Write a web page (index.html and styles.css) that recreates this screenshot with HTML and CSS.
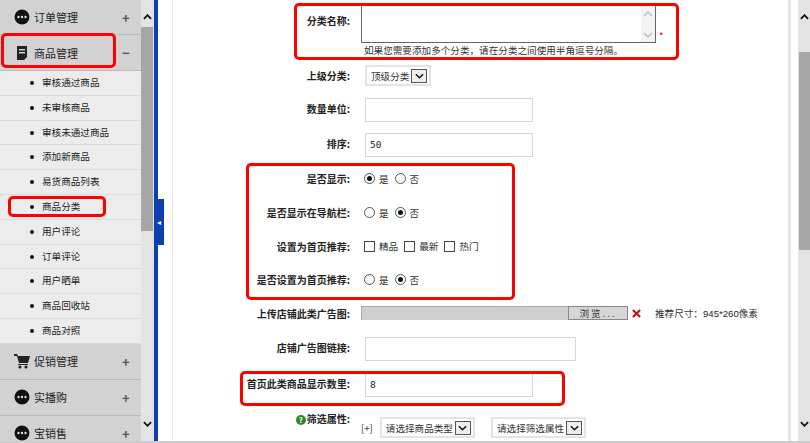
FILE: index.html
```html
<!DOCTYPE html>
<html lang="en">
<head>
    <meta charset="UTF-8">
    <title>商品分类</title>
    <link rel="stylesheet" href="styles.css">
</head>
<body>
    <div class="page">
        <div class="sidebar">
            <div class="menu-head first">
                <svg class="menu-icon" viewBox="0 0 16 16"><circle cx="8" cy="8" r="7.5" fill="#111"/><circle cx="4.5" cy="8" r="1.2" fill="#ddd"/><circle cx="8" cy="8" r="1.2" fill="#ddd"/><circle cx="11.5" cy="8" r="1.2" fill="#ddd"/></svg>
                <span class="menu-title">订单管理</span><span class="menu-sign">+</span>
            </div>
            <div class="menu-head">
                <svg class="menu-icon" viewBox="0 0 16 16"><path d="M3 1h10v11l-3 3H3z" fill="#222"/><rect x="5" y="4" width="6" height="1.4" fill="#ddd"/><rect x="5" y="7" width="6" height="1.4" fill="#ddd"/></svg>
                <span class="menu-title">商品管理</span><span class="menu-sign">−</span>
            </div>
            <div class="menu-item">审核通过商品</div>
            <div class="menu-item">未审核商品</div>
            <div class="menu-item">审核未通过商品</div>
            <div class="menu-item">添加新商品</div>
            <div class="menu-item">易货商品列表</div>
            <div class="menu-item">商品分类</div>
            <div class="menu-item">用户评论</div>
            <div class="menu-item">订单评论</div>
            <div class="menu-item">用户晒单</div>
            <div class="menu-item">商品回收站</div>
            <div class="menu-item">商品对照</div>
            <div class="menu-head">
                <svg class="menu-icon cart" viewBox="0 0 16 16"><path d="M0 1h3l1 2h12l-2 7H5L3 3H0z" fill="#222"/><rect x="4" y="11" width="10" height="1" fill="#222"/><circle cx="6" cy="14" r="1.6" fill="#222"/><circle cx="12" cy="14" r="1.6" fill="#222"/></svg>
                <span class="menu-title">促销管理</span><span class="menu-sign">+</span>
            </div>
            <div class="menu-head">
                <svg class="menu-icon" viewBox="0 0 16 16"><circle cx="8" cy="8" r="7.5" fill="#111"/><circle cx="4.5" cy="8" r="1.2" fill="#ddd"/><circle cx="8" cy="8" r="1.2" fill="#ddd"/><circle cx="11.5" cy="8" r="1.2" fill="#ddd"/></svg>
                <span class="menu-title">实播购</span><span class="menu-sign">+</span>
            </div>
            <div class="menu-head">
                <svg class="menu-icon" viewBox="0 0 16 16"><circle cx="8" cy="8" r="7.5" fill="#111"/><circle cx="4.5" cy="8" r="1.2" fill="#ddd"/><circle cx="8" cy="8" r="1.2" fill="#ddd"/><circle cx="11.5" cy="8" r="1.2" fill="#ddd"/></svg>
                <span class="menu-title">宝销售</span><span class="menu-sign">+</span>
            </div>
        </div>

        <div class="scrollbar side-scroll">
            <svg class="arrow" viewBox="0 0 10 6"><path d="M1 5l4-4 4 4" fill="none" stroke="#111" stroke-width="2"/></svg>
            <div class="thumb"></div>
            <svg class="arrow down" viewBox="0 0 10 6"><path d="M1 1l4 4 4-4" fill="none" stroke="#111" stroke-width="2"/></svg>
        </div>

        <div class="divider">
            <div class="divider-tab">◂</div>
        </div>

        <div class="content">
            <div class="form">
                <div class="row row-name">
                    <div class="label">分类名称:</div>
                    <div class="field">
                        <div class="name-line">
                            <div class="textarea">
                                <div class="ta-scroll">
                                    <svg viewBox="0 0 10 6"><path d="M1 5l4-4 4 4" fill="none" stroke="#bbb" stroke-width="1.4"/></svg>
                                    <svg viewBox="0 0 10 6"><path d="M1 1l4 4 4-4" fill="none" stroke="#bbb" stroke-width="1.4"/></svg>
                                </div>
                            </div>
                            <span class="required">*</span>
                        </div>
                        <div class="hint">如果您需要添加多个分类，请在分类之间使用半角逗号分隔。</div>
                    </div>
                </div>
                <div class="row row-select">
                    <div class="label">上级分类:</div>
                    <div class="field indent">
                        <div class="select">顶级分类<span class="select-btn"><svg viewBox="0 0 10 6"><path d="M1 1l4 4 4-4" fill="none" stroke="#111" stroke-width="1.6"/></svg></span></div>
                    </div>
                </div>
                <div class="row row-input row-unit">
                    <div class="label">数量单位:</div>
                    <div class="field indent"><div class="input"></div></div>
                </div>
                <div class="row row-input row-short">
                    <div class="label">排序:</div>
                    <div class="field indent"><div class="input value">50</div></div>
                </div>
                <div class="row row-choice">
                    <div class="label">是否显示:</div>
                    <div class="field choices">
                        <span class="radio on"></span><span class="opt">是</span>
                        <span class="radio"></span><span class="opt">否</span>
                    </div>
                </div>
                <div class="row row-choice">
                    <div class="label">是否显示在导航栏:</div>
                    <div class="field choices">
                        <span class="radio"></span><span class="opt">是</span>
                        <span class="radio on"></span><span class="opt">否</span>
                    </div>
                </div>
                <div class="row row-choice">
                    <div class="label">设置为首页推荐:</div>
                    <div class="field choices">
                        <span class="check"></span><span class="opt">精品</span>
                        <span class="check"></span><span class="opt">最新</span>
                        <span class="check"></span><span class="opt">热门</span>
                    </div>
                </div>
                <div class="row row-choice">
                    <div class="label">是否设置为首页推荐:</div>
                    <div class="field choices">
                        <span class="radio"></span><span class="opt">是</span>
                        <span class="radio on"></span><span class="opt">否</span>
                    </div>
                </div>
                <div class="row row-upload">
                    <div class="label">上传店铺此类广告图:</div>
                    <div class="field upload">
                        <div class="file-path"></div>
                        <div class="file-btn">浏览...</div>
                        <svg class="remove" viewBox="0 0 10 10"><path d="M1 1l8 8M9 1l-8 8" stroke="#c4121a" stroke-width="2.4"/></svg>
                        <span class="size-note">推荐尺寸：<span class="size-num">945*260</span>像素</span>
                    </div>
                </div>
                <div class="row row-input">
                    <div class="label">店铺广告图链接:</div>
                    <div class="field indent"><div class="input wide"></div></div>
                </div>
                <div class="row row-input">
                    <div class="label">首页此类商品显示数里:</div>
                    <div class="field indent"><div class="input value">8</div></div>
                </div>
                <div class="row row-filter">
                    <div class="label"><span class="help">?</span>筛选属性:</div>
                    <div class="field filter">
                        <span class="add">[+]</span>
                        <div class="select">请选择商品类型<span class="select-btn"><svg viewBox="0 0 10 6"><path d="M1 1l4 4 4-4" fill="none" stroke="#111" stroke-width="1.6"/></svg></span></div>
                        <div class="select">请选择筛选属性<span class="select-btn"><svg viewBox="0 0 10 6"><path d="M1 1l4 4 4-4" fill="none" stroke="#111" stroke-width="1.6"/></svg></span></div>
                    </div>
                </div>
            </div>
        </div>

        <div class="scrollbar page-scroll">
            <svg class="arrow" viewBox="0 0 10 6"><path d="M1 5l4-4 4 4" fill="none" stroke="#111" stroke-width="2"/></svg>
            <div class="thumb"></div>
            <svg class="arrow down" viewBox="0 0 10 6"><path d="M1 1l4 4 4-4" fill="none" stroke="#111" stroke-width="2"/></svg>
        </div>

        <!-- red marks drawn over the screenshot -->
        <div class="mark mark-menu"></div>
        <div class="mark mark-item"></div>
        <div class="mark mark-name"></div>
        <div class="mark mark-group"></div>
        <div class="mark mark-count"></div>
    </div>
</body>
</html>
```
FILE: styles.css
```css
* {
    box-sizing: border-box;
}
body {
    margin: 0;
    font-family: "Noto Sans CJK SC", "Liberation Sans", sans-serif;
    font-size: 9.6px;
    color: #333;
    background: #fff;
}
.page {
    position: relative;
    display: flex;
    width: 810px;
    height: 443px;
    overflow: hidden;
    border-bottom: 2px solid #ccc;
}

/* left menu */
.sidebar {
    width: 141px;
    flex: none;
    background: #ececec;
}
.menu-head {
    display: flex;
    align-items: center;
    height: 36px;
    padding-left: 14px;
    background: #d2d2d2;
    border-bottom: 1px solid #bbb;
    font-size: 11px;
    color: #222;
}
.menu-head.first {
    height: 35px;
}
.menu-icon {
    width: 16px;
    height: 16px;
    flex: none;
}
.menu-title {
    margin-left: 4px;
    width: 88px;
}
.menu-sign {
    font-size: 13px;
    font-weight: bold;
    color: #555;
}
.menu-item {
    position: relative;
    height: 24.8px;
    line-height: 23px;
    padding-left: 42px;
    border-bottom: 1px solid #dcdcdc;
    color: #222;
}
.menu-item::before {
    content: "";
    position: absolute;
    left: 30px;
    top: 10px;
    width: 4px;
    height: 4px;
    border-radius: 50%;
    background: #111;
}

/* scrollbars */
.scrollbar {
    position: relative;
    width: 13px;
    flex: none;
    background: #e3e3e3;
}
.scrollbar .arrow {
    position: absolute;
    left: 2px;
    top: 14px;
    width: 9px;
    height: 6px;
}
.scrollbar .arrow.down {
    top: auto;
    bottom: 14px;
}
.thumb {
    position: absolute;
    left: 0;
    width: 12px;
    background: #a6a6a6;
}
.side-scroll .thumb {
    top: 27px;
    height: 204px;
}
.page-scroll {
    width: 12px;
}
.page-scroll .thumb {
    top: 52px;
    left: 1px;
    width: 11px;
    height: 198px;
}

/* blue strip with the collapse tab */
.divider {
    position: relative;
    width: 4px;
    flex: none;
    background: #0a40b0;
}
.divider-tab {
    position: absolute;
    left: 0;
    top: 199px;
    width: 10px;
    height: 46px;
    background: #0a40b0;
    color: #fff;
    font-size: 8px;
    line-height: 46px;
    text-align: center;
}

/* form */
.content {
    flex: 1;
    padding-left: 14px;
    padding-right: 7px;
}
.form {
    height: 100%;
    border-left: 1px solid #e6e6e6;
    border-right: 3px solid #e6e6e6;
}
.row {
    display: flex;
}
.label {
    width: 177px;
    flex: none;
    text-align: right;
    font-size: 10px;
    font-weight: bold;
    color: #222;
}
.field {
    margin-left: 11px;
    flex: 1;
}
.field.indent {
    margin-left: 15px;
}
.row-name {
    height: 65px;
    padding-top: 6px;
}
.row-name .label {
    padding-top: 7px;
}
.name-line {
    display: flex;
    align-items: flex-end;
}
.textarea {
    display: flex;
    justify-content: flex-end;
    width: 295px;
    height: 37px;
    border: 1px solid #666;
    border-top: none;
    background: #fff;
}
.ta-scroll {
    display: flex;
    flex-direction: column;
    justify-content: space-between;
    align-items: center;
    width: 14px;
    padding: 5px 0 4px;
    background: #f4f4f4;
}
.ta-scroll svg {
    width: 10px;
    height: 6px;
}
.required {
    margin-left: 3px;
    line-height: 14px;
    color: #e00;
}
.hint {
    margin-left: 3px;
    line-height: 14px;
}
.row-select {
    height: 33px;
    align-items: flex-start;
}
.row-select .label {
    line-height: 21px;
}
.select {
    display: inline-flex;
    align-items: center;
    height: 21px;
    padding: 0 2px 0 4px;
    border: 2px solid #e4e4e4;
    color: #333;
    background: #fff;
}
.select-btn {
    display: flex;
    align-items: center;
    justify-content: center;
    width: 16px;
    height: 14px;
    margin-left: 2px;
    border: 1px solid #555;
    background: #eee;
}
.select-btn svg {
    width: 9px;
    height: 6px;
}
.row-input {
    height: 36px;
    align-items: flex-start;
}
.row-unit {
    height: 35px;
}
.row-short {
    height: 29px;
}
.row-input .label {
    line-height: 22px;
}
.input {
    width: 168px;
    height: 24px;
    padding-left: 4px;
    line-height: 21px;
    border: 1px solid #d6d6d6;
    font-family: "DejaVu Sans Mono", monospace;
    font-size: 9.5px;
    color: #223;
}
.input.wide {
    width: 211px;
}
.row-choice {
    align-items: center;
    height: 33.7px;
}
.choices {
    display: flex;
    align-items: center;
    margin-left: 14px;
}
.radio {
    position: relative;
    width: 11px;
    height: 11px;
    border: 1px solid #555;
    border-radius: 50%;
    margin-right: 4px;
}
.radio.on::after {
    content: "";
    position: absolute;
    left: 2px;
    top: 2px;
    width: 5px;
    height: 5px;
    border-radius: 50%;
    background: #111;
}
.check {
    width: 11px;
    height: 11px;
    border: 1px solid #444;
    margin-right: 4px;
}
.opt {
    margin-right: 6px;
}
.row-upload {
    align-items: center;
    height: 32.5px;
    margin-bottom: 8px;
}
.upload {
    display: flex;
    align-items: center;
}
.file-path {
    width: 207px;
    height: 14px;
    background: #cfcfcf;
    border-top: 1px solid #aaa;
    border-left: 1px solid #aaa;
}
.file-btn {
    width: 60px;
    height: 14px;
    line-height: 12px;
    text-align: center;
    letter-spacing: 2px;
    background: #d6d6d6;
    border: 1px solid #888;
}
.remove {
    width: 9px;
    height: 9px;
    margin-left: 4px;
}
.size-note {
    margin-left: 14px;
}
.size-num {
    font-family: "Liberation Sans", sans-serif;
    color: #223;
}
.row-filter {
    height: 32px;
    padding-top: 2px;
}
.help {
    display: inline-block;
    width: 10px;
    height: 10px;
    margin-right: 1px;
    border-radius: 50%;
    background: #2a8a2a;
    color: #fff;
    font-size: 8px;
    line-height: 10px;
    text-align: center;
}
.filter {
    display: flex;
    align-items: center;
    align-self: flex-start;
    padding-top: 6px;
}
.add {
    margin-right: 7px;
}
.filter .select {
    margin-right: 16px;
}

/* red marks */
.mark {
    position: absolute;
    border: 3px solid #f00;
    border-radius: 5px;
}
.mark-menu {
    left: 1px;
    top: 33px;
    width: 115px;
    height: 35px;
}
.mark-item {
    left: 8px;
    top: 196px;
    width: 98px;
    height: 21px;
}
.mark-name {
    left: 294px;
    top: 3px;
    width: 385px;
    height: 57px;
}
.mark-group {
    left: 246px;
    top: 163px;
    width: 269px;
    height: 137px;
}
.mark-count {
    left: 240px;
    top: 371px;
    width: 325px;
    height: 35px;
}
```
